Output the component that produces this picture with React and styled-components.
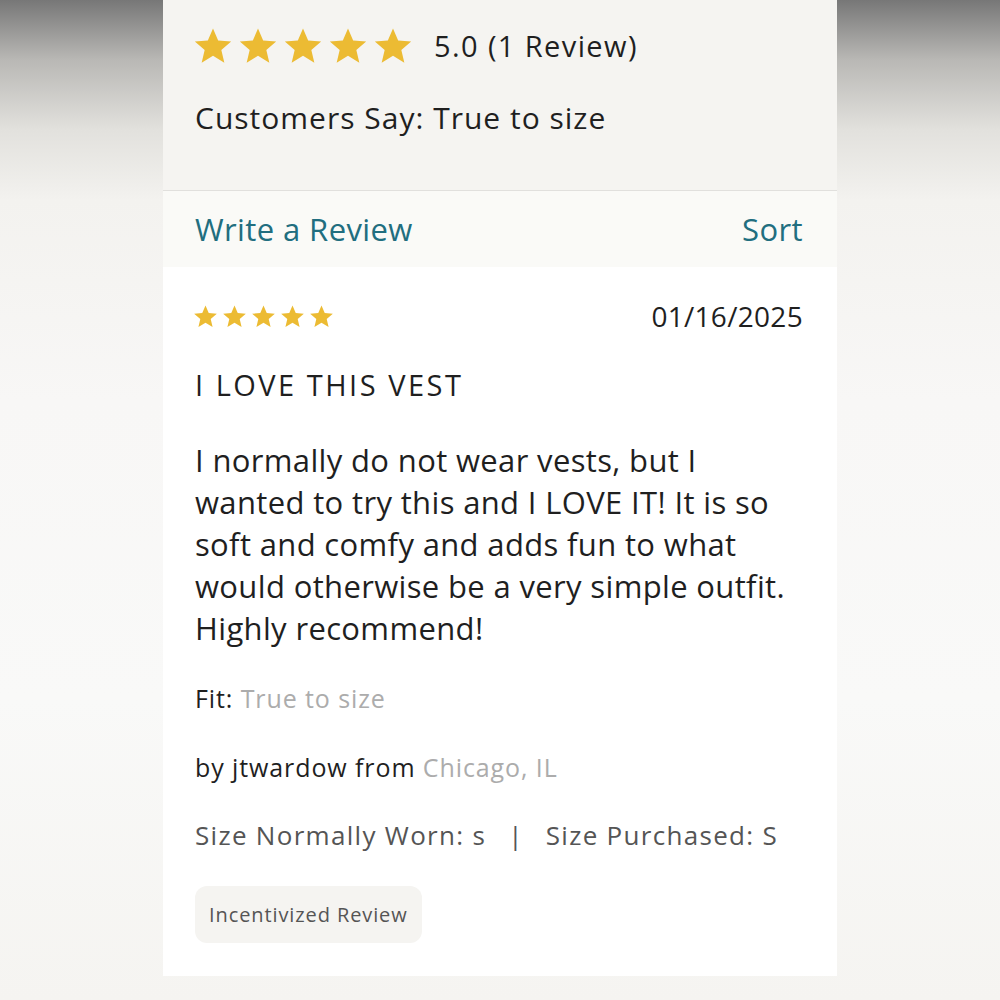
import styled, { createGlobalStyle } from "styled-components";

const GlobalStyle = createGlobalStyle`
  html, body {
    margin: 0;
    padding: 0;
  }
  body {
    width: 1000px;
    height: 1000px;
    overflow: hidden;
    font-family: "Open Sans", "Noto Sans", sans-serif;
    background: linear-gradient(
      to bottom,
      #777777 0px,
      #b9b8b5 60px,
      #e2e1dd 130px,
      #f3f2ef 200px,
      #f8f7f6 400px,
      #f9f9f8 700px,
      #f5f4f1 1000px
    );
  }
`;

const Star = ({ size }) => (
  <svg width={size} height={size} viewBox="0 0 24 24">
    <path
      d="M12 1.5l3.1 7.2 7.8.6-5.9 5.1 1.8 7.6L12 17.9 5.2 22l1.8-7.6L1.1 9.3l7.8-.6z"
      fill="#ecbb33"
    />
  </svg>
);

const Stars = ({ size, gap }) => (
  <StarRow $gap={gap}>
    {[0, 1, 2, 3, 4].map((i) => (
      <Star key={i} size={size} />
    ))}
  </StarRow>
);

const App = () => {
  return (
    <>
      <GlobalStyle />
      <Panel>
        <Summary>
          <RatingLine>
            <Stars size={40} gap={5} />
            <RatingText>5.0 (1 Review)</RatingText>
          </RatingLine>
          <SaysLine>Customers Say: True to size</SaysLine>
        </Summary>
        <ActionBar>
          <LinkText>Write a Review</LinkText>
          <LinkText>Sort</LinkText>
        </ActionBar>
        <Review>
          <ReviewHead>
            <Stars size={25} gap={4} />
            <DateText>01/16/2025</DateText>
          </ReviewHead>
          <Title>I LOVE THIS VEST</Title>
          <Body>
            I normally do not wear vests, but I wanted to try this and I LOVE
            IT! It is so soft and comfy and adds fun to what would otherwise be
            a very simple outfit. Highly recommend!
          </Body>
          <Meta $gapTop={33}>
            <Label>Fit:</Label> <Muted>True to size</Muted>
          </Meta>
          <Meta $gapTop={37}>
            <Label>by jtwardow from</Label> <Muted>Chicago, IL</Muted>
          </Meta>
          <Sizes>
            Size Normally Worn: s<Divider>|</Divider>Size Purchased: S
          </Sizes>
          <Badge>Incentivized Review</Badge>
        </Review>
      </Panel>
    </>
  );
};

export default App;

const Panel = styled.div`
  width: 674px;
  margin: 0 auto;
  display: flex;
  flex-direction: column;
`;

const Summary = styled.div`
  background: #f5f4f1;
  height: 191px;
  box-sizing: border-box;
  padding: 26px 32px 0 32px;
  border-bottom: 1px solid #e1e0dd;
  color: #1f1f1f;
`;

const RatingLine = styled.div`
  display: flex;
  align-items: center;
  gap: 21px;
  height: 40px;
`;

const StarRow = styled.div`
  display: flex;
  gap: ${(p) => p.$gap}px;
  margin-left: -2px;
`;

const RatingText = styled.span`
  font-size: 29px;
  line-height: 40px;
  letter-spacing: 1.4px;
`;

const SaysLine = styled.div`
  margin-top: 34px;
  font-size: 30px;
  line-height: 36px;
  letter-spacing: 1px;
`;

const ActionBar = styled.div`
  background: #fafaf7;
  height: 76px;
  padding: 0 34px 0 32px;
  display: flex;
  justify-content: space-between;
  align-items: center;
`;

const LinkText = styled.span`
  color: #216e7f;
  font-size: 31px;
  letter-spacing: 0.4px;
`;

const Review = styled.div`
  background: #ffffff;
  padding: 32px 34px 33px 32px;
  color: #1f1f1f;
  display: flex;
  flex-direction: column;
`;

const ReviewHead = styled.div`
  display: flex;
  justify-content: space-between;
  align-items: center;
  height: 34px;
`;

const DateText = styled.span`
  font-size: 28px;
  line-height: 34px;
  letter-spacing: 0.3px;
`;

const Title = styled.div`
  margin-top: 34px;
  font-size: 29px;
  line-height: 36px;
  letter-spacing: 2.5px;
`;

const Body = styled.p`
  margin: 36px 0 0 0;
  font-size: 31px;
  line-height: 42px;
  letter-spacing: 0.35px;
`;

const Meta = styled.div`
  margin-top: ${(p) => p.$gapTop}px;
  font-size: 25px;
  line-height: 32px;
  letter-spacing: 0.9px;
`;

const Label = styled.span`
  color: #1f1f1f;
`;

const Muted = styled.span`
  color: #acacac;
`;

const Sizes = styled.div`
  margin-top: 35px;
  font-size: 26px;
  line-height: 34px;
  color: #555;
  letter-spacing: 1.3px;
`;

const Divider = styled.span`
  display: inline-block;
  margin: 0 22px;
`;

const Badge = styled.div`
  align-self: flex-start;
  margin-top: 34px;
  height: 57px;
  box-sizing: border-box;
  padding: 0 14px;
  display: flex;
  align-items: center;
  background: #f5f4f1;
  border-radius: 12px;
  color: #555;
  font-size: 20px;
  letter-spacing: 0.9px;
`;
